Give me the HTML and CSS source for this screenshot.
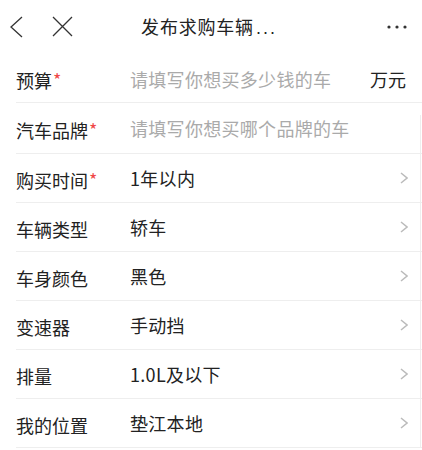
FILE: index.html
```html
<!DOCTYPE html>
<html lang="zh-CN">
<head>
	<meta charset="UTF-8">
	<title>发布求购车辆信息</title>
	<link rel="stylesheet" href="styles.css">
</head>
<body>
	<div class="header">
		<div class="nav-left">
			<svg class="icon-back" width="14" height="22" viewBox="0 0 14 22">
				<polyline points="12,1 1,11 12,21" fill="none" stroke="#333" stroke-width="1.3"/>
			</svg>
			<svg class="icon-close" width="21" height="21" viewBox="0 0 21 21">
				<path d="M1 1 L20 20 M20 1 L1 20" fill="none" stroke="#333" stroke-width="1.3"/>
			</svg>
		</div>
		<div class="title">发布求购车辆<span class="ellipsis">...</span></div>
		<div class="nav-right">
			<svg class="icon-more" width="20" height="4" viewBox="0 0 20 4">
				<circle cx="2" cy="2" r="1.6" fill="#333"/>
				<circle cx="10" cy="2" r="1.6" fill="#333"/>
				<circle cx="18" cy="2" r="1.6" fill="#333"/>
			</svg>
		</div>
	</div>

	<div class="form">
		<div class="row">
			<div class="label">预算<i class="req">*</i></div>
			<div class="value placeholder">请填写你想买多少钱的车</div>
			<div class="unit">万元</div>
		</div>
		<div class="row">
			<div class="label">汽车品牌<i class="req">*</i></div>
			<div class="value placeholder">请填写你想买哪个品牌的车</div>
		</div>
		<div class="row">
			<div class="label">购买时间<i class="req">*</i></div>
			<div class="value">1年以内</div>
			<svg class="arrow" width="8" height="12" viewBox="0 0 8 12"><polyline points="1,1 7,6 1,11" fill="none" stroke="#bbb" stroke-width="1.5"/></svg>
		</div>
		<div class="row">
			<div class="label">车辆类型</div>
			<div class="value">轿车</div>
			<svg class="arrow" width="8" height="12" viewBox="0 0 8 12"><polyline points="1,1 7,6 1,11" fill="none" stroke="#bbb" stroke-width="1.5"/></svg>
		</div>
		<div class="row">
			<div class="label">车身颜色</div>
			<div class="value">黑色</div>
			<svg class="arrow" width="8" height="12" viewBox="0 0 8 12"><polyline points="1,1 7,6 1,11" fill="none" stroke="#bbb" stroke-width="1.5"/></svg>
		</div>
		<div class="row">
			<div class="label">变速器</div>
			<div class="value">手动挡</div>
			<svg class="arrow" width="8" height="12" viewBox="0 0 8 12"><polyline points="1,1 7,6 1,11" fill="none" stroke="#bbb" stroke-width="1.5"/></svg>
		</div>
		<div class="row">
			<div class="label">排量</div>
			<div class="value">1.0L及以下</div>
			<svg class="arrow" width="8" height="12" viewBox="0 0 8 12"><polyline points="1,1 7,6 1,11" fill="none" stroke="#bbb" stroke-width="1.5"/></svg>
		</div>
		<div class="row">
			<div class="label">我的位置</div>
			<div class="value">垫江本地</div>
			<svg class="arrow" width="8" height="12" viewBox="0 0 8 12"><polyline points="1,1 7,6 1,11" fill="none" stroke="#bbb" stroke-width="1.5"/></svg>
		</div>
	</div>
</body>
</html>
```

FILE: styles.css
```css
* {
	box-sizing: border-box;
}
body {
	margin: 0;
	background: #fff;
	color: #222;
	font-family: "Noto Sans CJK SC", "Noto Sans", sans-serif;
	overflow: hidden;
}

.header {
	display: grid;
	grid-template-columns: 1fr auto 1fr;
	align-items: center;
	height: 55px;
	padding: 0 16px 2px 10px;
}
.nav-left { display: flex; align-items: center; gap: 28px; }
.nav-right { display: flex; justify-content: flex-end; }
.icon-more { margin-right: -1px; }
.title {
	font-size: 18px;
	line-height: 24px;
	letter-spacing: 0.8px;
	color: #222;
	padding-left: 2px;
}
.ellipsis { font-family: "Liberation Sans", sans-serif; letter-spacing: 2px; margin-left: 2px; }

.form {
	position: relative;
	margin-left: 16px;
}
.form::after {
	content: "";
	position: absolute;
	right: 1px;
	top: 60px;
	bottom: -20px;
	width: 1px;
	background: #eee;
}

.row {
	display: flex;
	align-items: center;
	height: 49px;
	border-bottom: 1px solid #eee;
	padding-right: 14px;
	font-size: 18px;
}
.row:first-child { height: 48px; }
.row:nth-child(2) { height: 51px; }

.label { width: 114px; flex-shrink: 0; padding-top: 3px; }
.req { font-style: normal; color: #f04848; font-size: 18px; line-height: 1; vertical-align: 1px; margin-left: 1px; }
.value { flex: 1; letter-spacing: 0.3px; }
.placeholder { color: #aaa; }
.unit { margin-right: 2px; }
.arrow { flex-shrink: 0; }
```
